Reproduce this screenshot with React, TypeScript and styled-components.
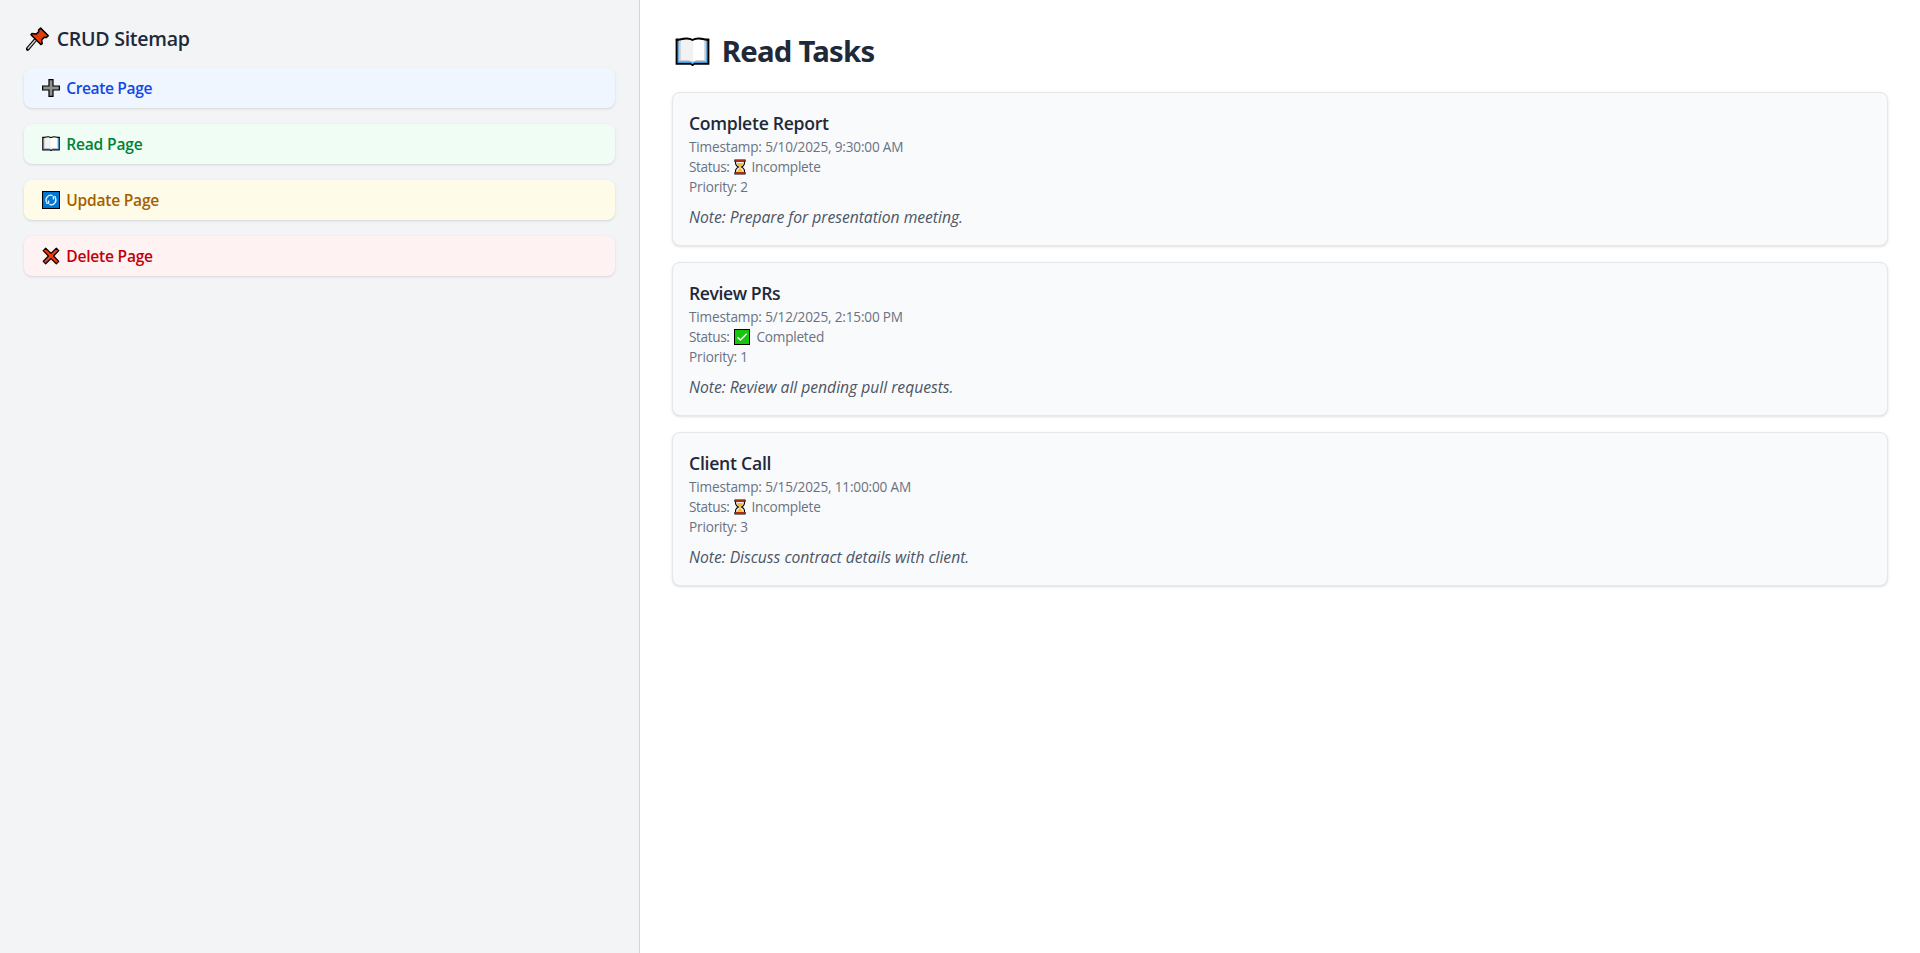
import React from "react";
import styled, { createGlobalStyle } from "styled-components";

const GlobalStyle = createGlobalStyle`
  *, *::before, *::after { box-sizing: border-box; }
  body {
    margin: 0;
    background: #fff;
    font-family: "Segoe UI", "Open Sans", "Noto Sans", sans-serif;
  }
  h1, h2, h3, p { margin: 0; }
  svg { display: block; flex: none; }
`;

const Page = styled.div`
  display: flex;
  height: 100vh;
`;

const Sidebar = styled.aside`
  width: 33.3333%;
  padding: 24px;
  background: #f3f4f6;
  border-right: 1px solid #d1d5dc;
`;

const SidebarTitle = styled.h2`
  display: flex;
  align-items: center;
  gap: 6.7px;
  height: 28px;
  margin-bottom: 16px;
  padding: 2px 0 0 2px;
  font-size: 19.6px;
  font-weight: 600;
  line-height: 26px;
  letter-spacing: -0.29px;
  color: #1e2939;
`;

const NavList = styled.nav`
  display: flex;
  flex-direction: column;
  gap: 16px;
`;

const NavLink = styled.a<{ $bg: string; $color: string; $tracking: number }>`
  display: flex;
  align-items: center;
  gap: 6.2px;
  height: 40px;
  padding: 8px 16px 8px 18px;
  border-radius: 8px;
  background: ${(p) => p.$bg};
  color: ${(p) => p.$color};
  box-shadow: 0 1px 3px rgba(0, 0, 0, 0.1), 0 1px 2px -1px rgba(0, 0, 0, 0.1);
  font-size: 15.6px;
  font-weight: 600;
  line-height: 24px;
  letter-spacing: ${(p) => p.$tracking}px;
  text-decoration: none;
`;

const Main = styled.main`
  flex: 1;
  padding: 32px;
  background: #fff;
`;

const PageTitle = styled.h1`
  display: flex;
  align-items: center;
  gap: 11.8px;
  height: 36px;
  margin-bottom: 24px;
  padding: 3px 0 0 3px;
  font-family: "Segoe UI", "Noto Sans", sans-serif;
  font-size: 29.3px;
  font-weight: 700;
  line-height: 33px;
  letter-spacing: -0.75px;
  color: #1e2939;
`;

const TaskList = styled.div`
  display: flex;
  flex-direction: column;
  gap: 16px;
`;

const Card = styled.article`
  padding: 16px;
  border: 1px solid #e5e7eb;
  border-radius: 8px;
  background: #f9fafb;
  box-shadow: 0 1px 3px rgba(0, 0, 0, 0.1), 0 1px 2px -1px rgba(0, 0, 0, 0.1);
`;

const CardTitle = styled.h3<{ $tracking: number }>`
  font-size: 17.6px;
  font-weight: 600;
  line-height: 28px;
  letter-spacing: ${(p) => p.$tracking}px;
  color: #1e2939;
`;

const Meta = styled.p`
  display: flex;
  align-items: center;
  height: 20px;
  font-size: 13.6px;
  line-height: 20px;
  letter-spacing: -0.17px;
  color: #6a7282;
  white-space: pre;
`;

const StatusLabel = styled.span`
  width: 45.5px;
  letter-spacing: -0.36px;
`;

const StatusValue = styled.span<{ $gap: number }>`
  margin-left: ${(p) => p.$gap}px;
  letter-spacing: -0.22px;
`;

const Note = styled.p`
  margin-top: 8px;
  font-size: 15.7px;
  font-style: italic;
  line-height: 24px;
  letter-spacing: -0.03px;
  color: #4a5565;
`;

const PinIcon = () => (
  <svg width="24" height="24" viewBox="0 0 24 24">
    <path d="M9.6 12.6 1.6 22" stroke="#000" strokeWidth="3.6" strokeLinecap="round" />
    <path d="M9.6 12.8 1.8 21.8" stroke="#ccc" strokeWidth="1.6" />
    <path
      d="M14.6 1.1 22.3 8.7 20.4 10.5 18.2 10.2 15.6 12.9 16.2 16.6 14.8 17.5 5 7.8 6 6.4 10.2 7.1 12.7 4.8 12.6 3Z"
      fill="#e83b05"
      stroke="#000"
      strokeWidth="1.5"
      strokeLinejoin="round"
    />
    <path d="M11 8.5 15 12.5" stroke="#c63305" strokeWidth="1" />
  </svg>
);

const PlusIcon = () => (
  <svg width="18" height="18" viewBox="0 0 18 18">
    <path
      d="M7 .6H11V7H17.4V11H11V17.4H7V11H.6V7H7Z"
      fill="#8f8f8f"
      stroke="#000"
      strokeWidth="1.2"
    />
  </svg>
);

const BookIcon = ({ width, height }: { width: number; height: number }) => (
  <svg width={width} height={height} viewBox="0 0 34 29">
    <path d="M.4 2H33.6V27.4H19L17 28.8 15 27.4H.4Z" fill="#000" />
    <path d="M2.2 4H31.8V25.5H19L17 26.8 15 25.5H2.2Z" fill="#3a96dd" />
    <path d="M3.4 3H30.6V24H19.5L17 25.2 14.5 24H3.4Z" fill="#ccc" />
    <path d="M5.4 2.6 12 1.8 17 3.8V24.2L12.5 22.6H5.4Z" fill="#f2f2f2" />
    <path d="M28.6 2.6 22 1.8 17 3.8V24.2L21.5 22.6H28.6Z" fill="#fff" />
    <path
      d="M.6 2.4H4.5Q13 .2 17 2.9 21 .2 29.5 2.4H33.4"
      fill="none"
      stroke="#000"
      strokeWidth="1.9"
    />
  </svg>
);

const UpdateIcon = () => (
  <svg width="18" height="18" viewBox="0 0 18 18">
    <rect x=".5" y=".5" width="17" height="17" fill="#0078d7" stroke="#000" strokeWidth="1.1" />
    <g fill="none" stroke="#e8f3fc" strokeWidth="1.3">
      <path d="M4.8 11.4A4.7 4.7 0 0 1 10.6 4.6" />
      <path d="M13.2 6.6A4.7 4.7 0 0 1 7.4 13.4" />
      <path d="M4 12.2H6.6V9.6M14 5.8H11.4V8.4" />
    </g>
  </svg>
);

const CrossIcon = () => (
  <svg width="18" height="18" viewBox="0 0 18 18">
    <path
      d="M3.7 1.2 9 6.4 14.3 1.2 16.8 3.7 11.6 9 16.8 14.3 14.3 16.8 9 11.6 3.7 16.8 1.2 14.3 6.4 9 1.2 3.7Z"
      fill="#e83b12"
      stroke="#000"
      strokeWidth="1.2"
      strokeLinejoin="round"
    />
  </svg>
);

const HourglassIcon = () => (
  <svg width="12" height="16" viewBox="0 0 12 16">
    <path
      d="M1.6 2.5H10.4V4.8Q10 6.6 7.6 8 10 9.4 10.4 11.2V13.5H1.6V11.2Q2 9.4 4.4 8 2 6.6 1.6 4.8Z"
      fill="#f4f4f4"
      stroke="#000"
      strokeWidth="1.1"
    />
    <path d="M2.6 4H9.4Q9 6 6.6 7.6V9.6L9.3 12.8H2.7L5.4 9.6V7.6Q3 6 2.6 4Z" fill="#fcb827" />
    <path d="M.4 .4H11.6V3H.4ZM.4 13H11.6V15.6H.4Z" fill="#000" />
    <path d="M1.2 1.2H10.8V2.7H1.2ZM1.2 13.3H10.8V14.8H1.2Z" fill="#e83b12" />
  </svg>
);

const CheckIcon = () => (
  <svg width="16" height="16" viewBox="0 0 16 16">
    <rect x=".5" y=".5" width="15" height="15" fill="#16c60c" stroke="#000" strokeWidth="1" />
    <path d="M3.4 8.2 6.4 11.1 12.7 4.8" fill="none" stroke="#fff" strokeWidth="1.4" />
  </svg>
);

const links = [
  { label: "Create Page", icon: <PlusIcon />, bg: "#eff6ff", color: "#1447e6", tracking: -0.39 },
  { label: "Read Page", icon: <BookIcon width={18} height={15.4} />, bg: "#f0fdf4", color: "#008236", tracking: -0.19 },
  { label: "Update Page", icon: <UpdateIcon />, bg: "#fefce8", color: "#a65f00", tracking: -0.24 },
  { label: "Delete Page", icon: <CrossIcon />, bg: "#fef2f2", color: "#c10007", tracking: -0.23 },
];

const tasks = [
  { title: "Complete Report", tracking: -0.28, time: "5/10/2025, 9:30:00 AM", done: false, priority: 2, note: "Prepare for presentation meeting." },
  { title: "Review PRs", tracking: -0.42, time: "5/12/2025, 2:15:00 PM", done: true, priority: 1, note: "Review all pending pull requests." },
  { title: "Client Call", tracking: -0.25, time: "5/15/2025, 11:00:00 AM", done: false, priority: 3, note: "Discuss contract details with client." },
];

export default function App() {
  return (
    <>
      <GlobalStyle />
      <Page>
        <Sidebar>
          <SidebarTitle>
            <PinIcon />
            CRUD Sitemap
          </SidebarTitle>
          <NavList>
            {links.map((link) => (
              <NavLink key={link.label} $bg={link.bg} $color={link.color} $tracking={link.tracking}>
                {link.icon}
                {link.label}
              </NavLink>
            ))}
          </NavList>
        </Sidebar>
        <Main>
          <PageTitle>
            <BookIcon width={35} height={29.5} />
            Read Tasks
          </PageTitle>
          <TaskList>
            {tasks.map((task) => (
              <Card key={task.title}>
                <CardTitle $tracking={task.tracking}>{task.title}</CardTitle>
                <Meta>{`Timestamp: ${task.time}`}</Meta>
                <Meta>
                  <StatusLabel>Status:</StatusLabel>
                  {task.done ? <CheckIcon /> : <HourglassIcon />}
                  <StatusValue $gap={task.done ? 6 : 5}>{task.done ? "Completed" : "Incomplete"}</StatusValue>
                </Meta>
                <Meta>{`Priority: ${task.priority}`}</Meta>
                <Note>{`Note: ${task.note}`}</Note>
              </Card>
            ))}
          </TaskList>
        </Main>
      </Page>
    </>
  );
}
